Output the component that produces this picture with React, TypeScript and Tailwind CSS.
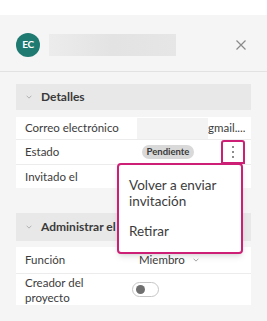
import React from 'react';

const Chevron = ({ className = '' }: { className?: string }) => (
  <svg viewBox="0 0 8 5" className={className} fill="none" stroke="currentColor" strokeWidth="1">
    <path d="M0.8 0.8 L4 4 L7.2 0.8" />
  </svg>
);

export default function App() {
  return (
    <div className="relative w-[267px] h-[321px] bg-white pt-[15px] text-[11.5px] text-[#3c3c3c] overflow-hidden" style={{ fontFamily: 'Lato, "Liberation Sans", sans-serif' }}>
      <div className="h-full bg-[#f5f5f5]">
        {/* header */}
        <div className="flex items-center h-[57px] pt-[3px] pl-4 pr-[21px] border-b border-[#e2e2e2]">
          <div className="w-6 h-6 rounded-full bg-[#1f7a72] text-white flex items-center justify-center text-[10px] font-bold tracking-tight">
            EC
          </div>
          <div className="ml-[9px] w-[127px] h-[22px] bg-gradient-to-r from-[#ececec] via-[#e3e3e3] to-[#e6e6e6]" />
          <svg viewBox="0 0 10 10" className="ml-auto w-[10px] h-[10px] text-[#8a8a8a]" fill="none" stroke="currentColor" strokeWidth="1.2">
            <path d="M0.5 0.5 L9.5 9.5 M9.5 0.5 L0.5 9.5" />
          </svg>
        </div>

        <div className="px-4">
          {/* Detalles */}
          <div className="mt-[12px] h-[26px] bg-[#e8e8e8] flex items-center pl-[10px]">
            <Chevron className="w-[6px] h-[4px] text-[#a0a0a0]" />
            <span className="ml-[9px] text-[12px] font-bold text-[#3a3a3a]">Detalles</span>
          </div>
          <div className="mt-[7px] bg-white">
            <div className="flex items-center h-[23px] pl-[9px] border-b border-[#ececec]">
              <span className="w-[112px] shrink-0">Correo electrónico</span>
              <div className="w-[71px] h-[21px] bg-[#f3f3f3]" />
              <span className="truncate">gmail....</span>
            </div>
            <div className="flex items-center h-[25px] pl-[9px] pr-[6px] border-b border-[#ececec]">
              <span className="w-[117px] shrink-0">Estado</span>
              <span className="h-[14px] w-[52px] rounded-full bg-[#d9d9d9] text-[9.5px] font-bold flex items-center justify-center text-[#3a3a3a]">
                Pendiente
              </span>
              <div className="ml-auto w-[24px] h-[24px] border-2 border-[#cc1f75] rounded-t-[3px] flex flex-col items-center justify-center gap-[3px]">
                <span className="w-[2px] h-[2px] bg-[#666] rounded-full" />
                <span className="w-[2px] h-[2px] bg-[#666] rounded-full" />
                <span className="w-[2px] h-[2px] bg-[#666] rounded-full" />
              </div>
            </div>
            <div className="flex items-center h-[23px] pl-[9px]">
              <span>Invitado el</span>
            </div>
          </div>

          {/* Administrar */}
          <div className="mt-[25px] h-[28px] bg-[#e8e8e8] flex items-center pl-[10px]">
            <Chevron className="w-[6px] h-[4px] text-[#a0a0a0]" />
            <span className="ml-[9px] text-[12px] font-bold text-[#3a3a3a] whitespace-nowrap">Administrar el acceso</span>
          </div>
          <div className="mt-[6px] bg-white">
            <div className="flex items-center h-[27px] pl-[9px] border-b border-[#ececec]">
              <span className="w-[114px] shrink-0">Función</span>
              <span>Miembro</span>
              <Chevron className="ml-[8px] w-[6px] h-[4px] text-[#8a8a8a]" />
            </div>
            <div className="flex items-center h-[31px] pl-[9px]">
              <span className="w-[107px] shrink-0 pr-[30px] leading-[15px]">Creador del proyecto</span>
              <div className="w-[27px] h-[15px] rounded-full border border-[#c6c6c6] bg-white flex items-center pl-[3px]">
                <span className="w-[9px] h-[9px] rounded-full bg-[#6f6f6f]" />
              </div>
            </div>
          </div>
        </div>
      </div>

      {/* dropdown menu */}
      <div className="absolute left-[117px] top-[163px] w-[126px] h-[91px] bg-white border-2 border-[#cc1f75] rounded-[4px] shadow-md pl-[10px] pr-2 pt-[12px] text-[13.5px]">
        <div className="leading-4">Volver a enviar invitación</div>
        <div className="leading-4 mt-[14px]">Retirar</div>
      </div>
    </div>
  );
}
